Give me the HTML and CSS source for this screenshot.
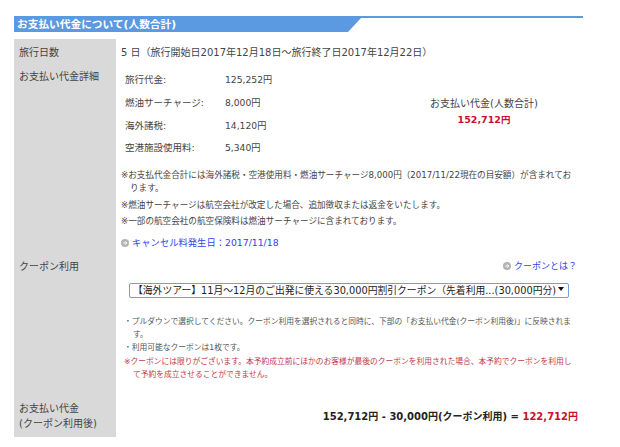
FILE: index.html
```html
<!DOCTYPE html>
<html lang="ja">
<head>
<meta charset="utf-8">
<title>お支払い代金について</title>
<link rel="stylesheet" href="styles.css">
</head>
<body>
<section class="panel">
  <h2 class="heading"><span class="heading-text">お支払い代金について(人数合計)</span></h2>
  <div class="grid">
    <div class="label label-days">旅行日数</div>
    <div class="cell cell-days">5 日（旅行開始日2017年12月18日～旅行終了日2017年12月22日）</div>

    <div class="label label-detail">お支払い代金詳細</div>
    <div class="cell cell-detail">
      <div class="detail-top">
        <dl class="fees">
          <dt>旅行代金:</dt><dd>125,252円</dd>
          <dt>燃油サーチャージ:</dt><dd>8,000円</dd>
          <dt>海外諸税:</dt><dd>14,120円</dd>
          <dt>空港施設使用料:</dt><dd>5,340円</dd>
        </dl>
        <div class="subtotal">
          <div>お支払い代金(人数合計)</div>
          <div class="subtotal-price">152,712円</div>
        </div>
      </div>
      <ul class="notes">
        <li>※お支払代金合計には海外諸税・空港使用料・燃油サーチャージ8,000円（2017/11/22現在の目安額）が含まれております。</li>
        <li>※燃油サーチャージは航空会社が改定した場合、追加徴収または返金をいたします。</li>
        <li>※一部の航空会社の航空保険料は燃油サーチャージに含まれております。</li>
      </ul>
      <a class="link link-cancel" href="#"><svg class="dot" viewBox="0 0 9 9"><circle cx="4.5" cy="4.5" r="4.5"/><path d="M2.5 4.5h4M4.7 2.8l1.8 1.7-1.8 1.7"/></svg>キャンセル料発生日：2017/11/18</a>
    </div>

    <div class="label label-coupon">クーポン利用</div>
    <div class="cell cell-coupon">
      <div class="coupon-help"><a class="link" href="#"><svg class="dot" viewBox="0 0 9 9"><circle cx="4.5" cy="4.5" r="4.5"/><path d="M2.5 4.5h4M4.7 2.8l1.8 1.7-1.8 1.7"/></svg>クーポンとは？</a></div>
      <div class="select-wrap">
        <select class="select">
          <option>【海外ツアー】11月～12月のご出発に使える30,000円割引クーポン（先着利用...(30,000円分)</option>
        </select>
      </div>
      <ul class="coupon-notes">
        <li>・プルダウンで選択してください。クーポン利用を選択されると同時に、下部の「お支払い代金(クーポン利用後)」に反映されます。</li>
        <li>・利用可能なクーポンは1枚です。</li>
        <li class="warn">※クーポンには限りがございます。本予約成立前にほかのお客様が最後のクーポンを利用された場合、本予約でクーポンを利用して予約を成立させることができません。</li>
      </ul>
    </div>

    <div class="label label-total">お支払い代金<br>(クーポン利用後)</div>
    <div class="cell cell-total">152,712円 - 30,000円(クーポン利用) = <span class="total-price">122,712円</span></div>
  </div>
</section>
</body>
</html>
```
FILE: styles.css
```css
* { box-sizing: border-box; }
html, body { margin: 0; padding: 0; background: #fff; }
body {
  font-family: "DejaVu Sans", "Noto Sans CJK JP", sans-serif;
  font-size: 10px;
  color: #444;
  height: 447px;
  overflow: hidden;
}
.panel { width: 569px; margin: 16px 0 0 14px; }
.heading {
  margin: 0;
  height: 16px;
  border-top: 2px solid #5b99e0;
}
.heading-text {
  display: block;
  width: 347px;
  height: 14px;
  padding-left: 3px;
  background: #5b99e0;
  color: #fff;
  font-size: 10.7px;
  font-weight: bold;
  line-height: 13px;
  clip-path: polygon(0 0, 100% 0, 334px 100%, 0 100%);
}
.grid {
  display: grid;
  grid-template-columns: 102px 1fr;
  margin-top: 7px;
}
.label { background: #d9d9d9; padding-left: 5px; }
.cell { padding-left: 5px; }
.label-days, .cell-days { height: 24px; padding-top: 5px; }
.label-detail { padding-top: 5px; height: 190px; }
.cell-detail { height: 190px; padding-top: 0; }
.detail-top { display: flex; height: 97px; padding-left: 4px; }
.fees {
  margin: 0;
  width: 300px;
  display: grid;
  grid-template-columns: 100px 1fr;
  grid-auto-rows: 22.7px;
  align-items: center;
  font-size: 9.5px;
  padding-top: 5px;
}
.fees dt, .fees dd { margin: 0; }
.fees dd { font-size: 9.2px; }
.subtotal { width: 118px; padding-top: 32px; text-align: center; }
.subtotal-price { color: #c8102e; font-weight: bold; font-size: 9.5px; margin-top: 2px; }
.notes, .coupon-notes { list-style: none; margin: 0; padding: 0; }
.notes { font-size: 8.6px; padding-top: 9px; width: 458px; }
.notes li { line-height: 13px; padding-left: 9px; text-indent: -9px; margin-bottom: 3.5px; }
.link { color: #3344ee; text-decoration: none; font-size: 9px; }
.link-cancel { font-size: 9.3px; }
.cell-detail > .link { display: block; margin-top: 8px; line-height: 14px; }
.dot {
  display: inline-block;
  width: 8px; height: 8px;
  margin-right: 3px;
  vertical-align: -1px;
}
.dot circle { fill: #b4b4b4; }
.dot path { fill: none; stroke: #fff; stroke-width: 1.1; }
.label-coupon { height: 144px; padding-top: 5px; }
.cell-coupon { height: 144px; padding-top: 6px; }
.coupon-help { text-align: right; padding-right: 6px; line-height: 14px; }
.select-wrap { position: relative; width: 440px; margin: 10px 0 0 8px; }
.select-wrap::after {
  content: "";
  position: absolute;
  right: 5px; top: 4px;
  border-left: 3px solid transparent;
  border-right: 3px solid transparent;
  border-top: 4px solid #111;
}
.select {
  display: block;
  width: 100%;
  height: 15px;
  padding: 0 12px 0 3px;
  appearance: none;
  -webkit-appearance: none;
  background: #fff;
  border: 1px solid #6f9fe0;
  border-radius: 2px;
  color: #222;
  font: 9.8px "DejaVu Sans", "Noto Sans CJK JP", sans-serif;
  line-height: 13px;
}
.coupon-notes { font-size: 7.75px; padding: 18px 0 0 3px; width: 455px; color: #555; }
.coupon-notes li { line-height: 12.7px; padding-left: 9px; text-indent: -9px; margin-bottom: 1px; }
.coupon-notes .warn { color: #c0394b; }
.label-total { height: 40px; padding-top: 4px; line-height: 15px; }
.cell-total {
  height: 40px;
  padding: 13px 5px 0 0;
  text-align: right;
  font-weight: bold;
  font-size: 10px;
  color: #222;
  line-height: 14px;
}
.total-price { color: #c8102e; }
```
